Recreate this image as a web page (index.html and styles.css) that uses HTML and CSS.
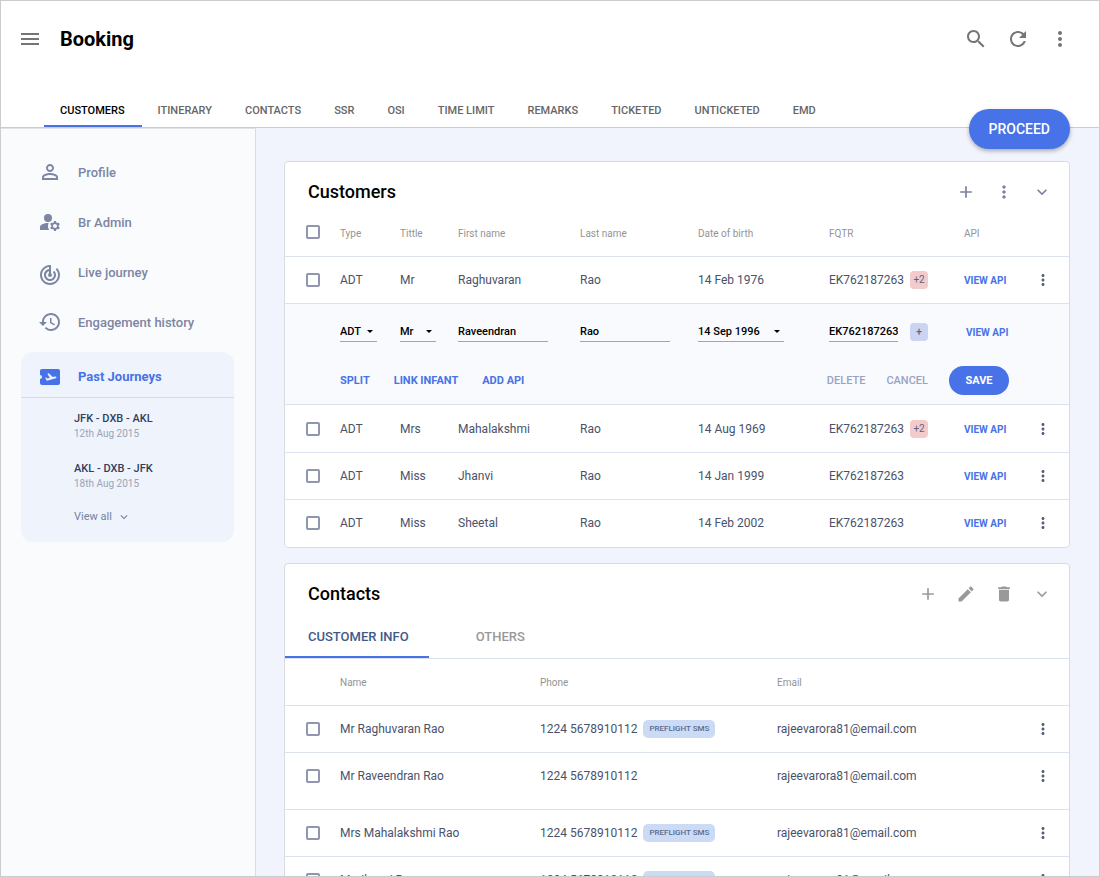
FILE: index.html
```html
<!DOCTYPE html>
<html lang="en">
<head>
    <meta charset="UTF-8">
    <meta name="viewport" content="width=device-width, initial-scale=1.0">
    <title>Booking</title>
    <link rel="stylesheet" href="styles.css">
</head>
<body>
    <!-- shared icons -->
    <svg class="sprite" aria-hidden="true">
        <symbol id="more" viewBox="0 0 24 24"><path d="M12 8c1.1 0 2-.9 2-2s-.9-2-2-2-2 .9-2 2 .9 2 2 2zm0 2c-1.1 0-2 .9-2 2s.9 2 2 2 2-.9 2-2-.9-2-2-2zm0 6c-1.1 0-2 .9-2 2s.9 2 2 2 2-.9 2-2-.9-2-2-2z"/></symbol>
        <symbol id="add" viewBox="0 0 24 24"><path d="M19 13h-6v6h-2v-6H5v-2h6V5h2v6h6v2z"/></symbol>
        <symbol id="chevron" viewBox="0 0 24 24"><path d="M16.59 8.59L12 13.17 7.41 8.59 6 10l6 6 6-6z"/></symbol>
    </svg>

    <div class="app">
        <header class="header">
            <div class="topbar">
                <button class="icon-btn" aria-label="Menu">
                    <svg class="icon-lg" viewBox="0 0 24 24"><path d="M3 18h18v-2H3v2zm0-5h18v-2H3v2zm0-7v2h18V6H3z"/></svg>
                </button>
                <h1>Booking</h1>
                <div class="topbar-actions">
                    <button class="icon-btn" aria-label="Search">
                        <svg class="icon-lg" viewBox="0 0 24 24"><path d="M15.5 14h-.79l-.28-.27C15.41 12.59 16 11.11 16 9.5 16 5.91 13.09 3 9.5 3S3 5.91 3 9.5 5.91 16 9.5 16c1.61 0 3.09-.59 4.23-1.57l.27.28v.79l5 4.99L20.49 19l-4.99-5zm-6 0C7.01 14 5 11.99 5 9.5S7.01 5 9.5 5 14 7.01 14 9.5 11.99 14 9.5 14z"/></svg>
                    </button>
                    <button class="icon-btn" aria-label="Refresh">
                        <svg class="icon-lg" viewBox="0 0 24 24"><path d="M17.65 6.35C16.2 4.9 14.21 4 12 4c-4.42 0-7.99 3.58-7.99 8s3.57 8 7.99 8c3.73 0 6.84-2.55 7.73-6h-2.08c-.82 2.33-3.04 4-5.65 4-3.31 0-6-2.69-6-6s2.69-6 6-6c1.66 0 3.14.69 4.22 1.78L13 11h7V4l-2.35 2.35z"/></svg>
                    </button>
                    <button class="icon-btn" aria-label="More"><svg class="icon-lg"><use href="#more"/></svg></button>
                </div>
            </div>
            <nav class="tabs">
                <a href="#" class="tab active">CUSTOMERS</a>
                <a href="#" class="tab">ITINERARY</a>
                <a href="#" class="tab">CONTACTS</a>
                <a href="#" class="tab">SSR</a>
                <a href="#" class="tab">OSI</a>
                <a href="#" class="tab">TIME LIMIT</a>
                <a href="#" class="tab">REMARKS</a>
                <a href="#" class="tab">TICKETED</a>
                <a href="#" class="tab">UNTICKETED</a>
                <a href="#" class="tab">EMD</a>
            </nav>
            <button class="proceed">PROCEED</button>
        </header>

        <div class="body">
            <aside class="sidebar">
                <a href="#" class="side-link">
                    <svg class="icon-lg" viewBox="0 0 24 24"><path d="M12 5.9a2.1 2.1 0 110 4.2 2.1 2.1 0 010-4.2m0 9c2.97 0 6.1 1.46 6.1 2.1v1.1H5.9V17c0-.64 3.13-2.1 6.1-2.1M12 4C9.79 4 8 5.79 8 8s1.79 4 4 4 4-1.79 4-4-1.79-4-4-4zm0 9c-2.67 0-8 1.34-8 4v3h16v-3c0-2.66-5.33-4-8-4z"/></svg>
                    Profile
                </a>
                <a href="#" class="side-link">
                    <svg class="icon-lg" viewBox="0 0 24 24"><circle cx="10" cy="8" r="4"/><path d="M10.67 13.02C10.45 13.01 10.23 13 10 13c-2.42 0-4.68.67-6.61 1.82C2.51 15.34 2 16.32 2 17.35V20h9.26C10.47 18.87 10 17.49 10 16c0-1.07.25-2.07.67-2.98z"/><path d="M20.75 16c0-.22-.03-.42-.06-.63l1.14-1.01-1-1.73-1.45.49c-.32-.27-.68-.48-1.08-.63L18 11h-2l-.3 1.49c-.4.15-.76.36-1.08.63l-1.45-.49-1 1.73 1.14 1.01c-.03.21-.06.41-.06.63s.03.42.06.63l-1.14 1.01 1 1.73 1.45-.49c.32.27.68.48 1.08.63L16 21h2l.3-1.49c.4-.15.76-.36 1.08-.63l1.45.49 1-1.73-1.14-1.01c.03-.21.06-.41.06-.63zM17 18c-1.1 0-2-.9-2-2s.9-2 2-2 2 .9 2 2-.9 2-2 2z"/></svg>
                    Br Admin
                </a>
                <a href="#" class="side-link">
                    <svg class="icon-lg" viewBox="0 -3 24 24"><path d="M19.07 4.93l-1.41 1.41C19.1 7.79 20 9.79 20 12c0 4.42-3.58 8-8 8s-8-3.58-8-8c0-4.08 3.05-7.44 7-7.93v2.02C8.16 6.57 6 9.03 6 12c0 3.31 2.69 6 6 6s6-2.69 6-6c0-1.66-.67-3.16-1.76-4.24l-1.41 1.41C15.55 9.9 16 10.9 16 12c0 2.21-1.79 4-4 4s-4-1.79-4-4c0-1.86 1.28-3.41 3-3.86v2.14c-.6.35-1 .98-1 1.72 0 1.1.9 2 2 2s2-.9 2-2c0-.74-.4-1.38-1-1.72V2h-1C6.48 2 2 6.48 2 12s4.48 10 10 10 10-4.48 10-10c0-2.76-1.12-5.26-2.93-7.07z"/></svg>
                    Live journey
                </a>
                <a href="#" class="side-link">
                    <svg class="icon-lg" viewBox="0 0 24 24"><path d="M13 3c-4.97 0-9 4.03-9 9H1l3.89 3.89.07.14L9 12H6c0-3.87 3.13-7 7-7s7 3.13 7 7-3.13 7-7 7c-1.93 0-3.68-.79-4.94-2.06l-1.42 1.42C8.27 19.99 10.51 21 13 21c4.97 0 9-4.03 9-9s-4.03-9-9-9zm-1 5v5l4.28 2.54.72-1.21-3.5-2.08V8H12z"/></svg>
                    Engagement history
                </a>
                <section class="journeys">
                    <h2 class="journeys-title">
                        <svg class="icon-lg" viewBox="0 0 24 24"><path d="M20.19 4H4c-1.1 0-1.99.9-1.99 2v4c1.1 0 1.99.9 1.99 2s-.89 2-2 2v4c0 1.1.9 2 2 2h16.19c1 0 1.81-.9 1.81-2V6c0-1.1-.81-2-1.81-2zm-2.46 9.3l-8.86 2.36-1.66-2.88.93-.25 1.26.99 2.39-.64-2.4-4.16 1.4-.38 4.01 3.74 2.44-.65c.51-.14 1.04.17 1.18.68.13.51-.17 1.04-.69 1.19z"/></svg>
                        Past Journeys
                    </h2>
                    <ul class="journey-list">
                        <li><a href="#">JFK - DXB - AKL</a><span>12th Aug 2015</span></li>
                        <li><a href="#">AKL - DXB - JFK</a><span>18th Aug 2015</span></li>
                    </ul>
                    <button class="view-all">View all <svg class="icon-xs"><use href="#chevron"/></svg></button>
                </section>
            </aside>

            <main class="main">
                <section class="card">
                    <div class="card-head">
                        <h2>Customers</h2>
                        <div class="card-actions">
                            <button class="icon-btn" aria-label="Add"><svg class="icon"><use href="#add"/></svg></button>
                            <button class="icon-btn" aria-label="More"><svg class="icon"><use href="#more"/></svg></button>
                            <button class="icon-btn" aria-label="Collapse"><svg class="icon"><use href="#chevron"/></svg></button>
                        </div>
                    </div>
                    <table class="table customers">
                        <colgroup>
                            <col class="c-check"><col class="c-type"><col class="c-title"><col class="c-first"><col class="c-last">
                            <col class="c-dob"><col class="c-fqtr"><col class="c-api"><col class="c-more">
                        </colgroup>
                        <thead>
                            <tr>
                                <th class="check"><input type="checkbox" aria-label="Select all customers"></th>
                                <th>Type</th>
                                <th>Tittle</th>
                                <th>First name</th>
                                <th>Last name</th>
                                <th>Date of birth</th>
                                <th>FQTR</th>
                                <th>API</th>
                                <th></th>
                            </tr>
                        </thead>
                        <tbody>
                            <tr>
                                <td class="check"><input type="checkbox" aria-label="Select Raghuvaran Rao"></td>
                                <td>ADT</td>
                                <td>Mr</td>
                                <td>Raghuvaran</td>
                                <td>Rao</td>
                                <td>14 Feb 1976</td>
                                <td><div class="inline">EK762187263 <span class="badge red">+2</span></div></td>
                                <td><a href="#" class="api-link">VIEW API</a></td>
                                <td class="more"><button class="icon-btn" aria-label="More"><svg class="icon-sm"><use href="#more"/></svg></button></td>
                            </tr>
                            <tr class="edit-row">
                                <td></td>
                                <td><div class="select w-type"><select aria-label="Type"><option>ADT</option></select></div></td>
                                <td><div class="select w-title"><select aria-label="Title"><option>Mr</option></select></div></td>
                                <td><input class="field w-name" type="text" aria-label="First name" value="Raveendran"></td>
                                <td><input class="field w-name" type="text" aria-label="Last name" value="Rao"></td>
                                <td><div class="select w-dob"><select aria-label="Date of birth"><option>14 Sep 1996</option></select></div></td>
                                <td><div class="inline wide"><input class="field w-fqtr" type="text" aria-label="FQTR" value="EK762187263"><button class="badge blue" aria-label="Add FQTR">+</button></div></td>
                                <td class="api-cell"><a href="#" class="api-link">VIEW API</a></td>
                                <td></td>
                            </tr>
                            <tr class="edit-actions">
                                <td></td>
                                <td colspan="8">
                                    <div class="actions">
                                        <div class="actions-left">
                                            <button class="text-btn">SPLIT</button>
                                            <button class="text-btn">LINK INFANT</button>
                                            <button class="text-btn">ADD API</button>
                                        </div>
                                        <div class="actions-right">
                                            <button class="text-btn muted">DELETE</button>
                                            <button class="text-btn muted">CANCEL</button>
                                            <button class="save">SAVE</button>
                                        </div>
                                    </div>
                                </td>
                            </tr>
                            <tr>
                                <td class="check"><input type="checkbox" aria-label="Select Mahalakshmi Rao"></td>
                                <td>ADT</td>
                                <td>Mrs</td>
                                <td>Mahalakshmi</td>
                                <td>Rao</td>
                                <td>14 Aug 1969</td>
                                <td><div class="inline">EK762187263 <span class="badge red">+2</span></div></td>
                                <td><a href="#" class="api-link">VIEW API</a></td>
                                <td class="more"><button class="icon-btn" aria-label="More"><svg class="icon-sm"><use href="#more"/></svg></button></td>
                            </tr>
                            <tr>
                                <td class="check"><input type="checkbox" aria-label="Select Jhanvi Rao"></td>
                                <td>ADT</td>
                                <td>Miss</td>
                                <td>Jhanvi</td>
                                <td>Rao</td>
                                <td>14 Jan 1999</td>
                                <td>EK762187263</td>
                                <td><a href="#" class="api-link">VIEW API</a></td>
                                <td class="more"><button class="icon-btn" aria-label="More"><svg class="icon-sm"><use href="#more"/></svg></button></td>
                            </tr>
                            <tr>
                                <td class="check"><input type="checkbox" aria-label="Select Sheetal Rao"></td>
                                <td>ADT</td>
                                <td>Miss</td>
                                <td>Sheetal</td>
                                <td>Rao</td>
                                <td>14 Feb 2002</td>
                                <td>EK762187263</td>
                                <td><a href="#" class="api-link">VIEW API</a></td>
                                <td class="more"><button class="icon-btn" aria-label="More"><svg class="icon-sm"><use href="#more"/></svg></button></td>
                            </tr>
                        </tbody>
                    </table>
                </section>

                <section class="card">
                    <div class="card-head">
                        <h2>Contacts</h2>
                        <div class="card-actions gray">
                            <button class="icon-btn" aria-label="Add"><svg class="icon"><use href="#add"/></svg></button>
                            <button class="icon-btn" aria-label="Edit"><svg class="icon" viewBox="0 0 24 24"><path d="M3 17.25V21h3.75L17.81 9.94l-3.75-3.75L3 17.25zM20.71 7.04c.39-.39.39-1.02 0-1.41l-2.34-2.34c-.39-.39-1.02-.39-1.41 0l-1.83 1.83 3.75 3.75 1.83-1.83z"/></svg></button>
                            <button class="icon-btn" aria-label="Delete"><svg class="icon" viewBox="0 0 24 24"><path d="M6 19c0 1.1.9 2 2 2h8c1.1 0 2-.9 2-2V7H6v12zM19 4h-3.500l-1-1h-5l-1 1H5v2h14V4z"/></svg></button>
                            <button class="icon-btn" aria-label="Collapse"><svg class="icon"><use href="#chevron"/></svg></button>
                        </div>
                    </div>
                    <div class="card-tabs">
                        <button class="card-tab active">CUSTOMER INFO</button>
                        <button class="card-tab">OTHERS</button>
                    </div>
                    <table class="table contacts">
                        <colgroup>
                            <col class="c-check"><col class="c-name"><col class="c-phone"><col class="c-email"><col class="c-more">
                        </colgroup>
                        <thead>
                            <tr>
                                <th></th>
                                <th>Name</th>
                                <th>Phone</th>
                                <th>Email</th>
                                <th></th>
                            </tr>
                        </thead>
                        <tbody>
                            <tr>
                                <td class="check"><input type="checkbox" aria-label="Select Mr Raghuvaran Rao"></td>
                                <td>Mr Raghuvaran Rao</td>
                                <td><div class="inline">1224 5678910112 <span class="tag">PREFLIGHT SMS</span></div></td>
                                <td>rajeevarora81@email.com</td>
                                <td class="more"><button class="icon-btn" aria-label="More"><svg class="icon-sm"><use href="#more"/></svg></button></td>
                            </tr>
                            <tr class="tall">
                                <td class="check"><input type="checkbox" aria-label="Select Mr Raveendran Rao"></td>
                                <td>Mr Raveendran Rao</td>
                                <td>1224 5678910112</td>
                                <td>rajeevarora81@email.com</td>
                                <td class="more"><button class="icon-btn" aria-label="More"><svg class="icon-sm"><use href="#more"/></svg></button></td>
                            </tr>
                            <tr>
                                <td class="check"><input type="checkbox" aria-label="Select Mrs Mahalakshmi Rao"></td>
                                <td>Mrs Mahalakshmi Rao</td>
                                <td><div class="inline">1224 5678910112 <span class="tag">PREFLIGHT SMS</span></div></td>
                                <td>rajeevarora81@email.com</td>
                                <td class="more"><button class="icon-btn" aria-label="More"><svg class="icon-sm"><use href="#more"/></svg></button></td>
                            </tr>
                            <tr>
                                <td class="check"><input type="checkbox" aria-label="Select Mr Jhanvi Rao"></td>
                                <td>Mr Jhanvi Rao</td>
                                <td><div class="inline">1224 5678910112 <span class="tag">PREFLIGHT SMS</span></div></td>
                                <td>rajeevarora81@email.com</td>
                                <td class="more"><button class="icon-btn" aria-label="More"><svg class="icon-sm"><use href="#more"/></svg></button></td>
                            </tr>
                        </tbody>
                    </table>
                </section>
            </main>
        </div>
    </div>
</body>
</html>
```
FILE: styles.css
```css
* {
    box-sizing: border-box;
}
body {
    font-family: Roboto, sans-serif;
    font-size: 12px;
    color: #4a526b;
    margin: 0;
}
h1, h2, ul {
    margin: 0;
    padding: 0;
}
a {
    text-decoration: none;
    color: inherit;
}
button, input, select {
    font-family: inherit;
    margin: 0;
    padding: 0;
}
button {
    background: none;
    border: none;
    cursor: pointer;
}
svg {
    display: block;
    fill: currentColor;
    flex: none;
    overflow: visible;
}
.sprite {
    display: none;
}
.icon-lg {
    width: 24px;
    height: 24px;
}
.icon {
    width: 20px;
    height: 20px;
}
.icon-sm {
    width: 18px;
    height: 18px;
}
.icon-xs {
    width: 14px;
    height: 14px;
}
.icon-btn {
    display: block;
    color: inherit;
}
.app {
    height: 100vh;
    display: flex;
    flex-direction: column;
    border: 1px solid #ccc;
    overflow: hidden;
}

/* header */
.header {
    position: relative;
    flex: none;
    background-color: #fff;
    border-bottom: 1px solid #ccc;
}
.topbar {
    display: flex;
    align-items: center;
    height: 76px;
    padding: 0 27px 0 17px;
    color: #757575;
}
.topbar h1 {
    margin-left: 18px;
    font-size: 20px;
    font-weight: 700;
    color: #000;
}
.topbar-actions {
    display: flex;
    gap: 18px;
    margin-left: auto;
}
.tabs {
    display: flex;
    padding: 17px 0 0 43px;
}
.tab {
    height: 33px;
    padding: 0 17px 0 16px;
    border-bottom: 2px solid transparent;
    font-size: 11px;
    font-weight: 500;
    line-height: 33px;
    color: #666;
}
.tab.active {
    color: #000;
    border-color: #4872e8;
}
.proceed {
    position: absolute;
    right: 29px;
    bottom: -22px;
    z-index: 1;
    height: 40px;
    padding: 0 20px;
    border-radius: 20px;
    background-color: #4872e8;
    box-shadow: 0 2px 4px rgba(0, 0, 0, 0.3);
    color: #fff;
    font-size: 14px;
    font-weight: 500;
}

.body {
    flex: 1;
    display: flex;
    min-height: 0;
}

/* sidebar */
.sidebar {
    flex: none;
    width: 255px;
    padding-top: 18px;
    background-color: #fafbfd;
    border-top: 1px solid #e2e2e2;
    border-right: 1px solid #d9dbe0;
}
.side-link {
    display: flex;
    align-items: center;
    gap: 16px;
    height: 50px;
    padding-left: 37px;
    font-size: 13px;
    font-weight: 500;
    color: #7c86a3;
}
.journeys {
    margin: 5px 21px 0 20px;
    padding-bottom: 18px;
    background-color: #eef3fc;
    border-radius: 12px;
}
.journeys-title {
    display: flex;
    align-items: center;
    gap: 16px;
    height: 46px;
    padding: 4px 0 0 17px;
    border-bottom: 1px solid #d8dbe0;
    font-size: 13px;
    font-weight: 700;
    color: #4872e8;
}
.journey-list {
    list-style: none;
    padding: 13px 0 0 53px;
}
.journey-list li {
    height: 49px;
}
.journey-list li + li {
    padding-top: 1px;
}
.journey-list a,
.journey-list span {
    display: block;
    line-height: 15px;
}
.journey-list a {
    font-size: 11px;
    font-weight: 500;
    color: #343d5c;
}
.journey-list span {
    font-size: 10px;
    color: #9aa3b8;
}
.view-all {
    display: flex;
    align-items: center;
    gap: 5px;
    height: 15px;
    margin-left: 53px;
    font-size: 11px;
    color: #7482a3;
}

/* cards */
.main {
    flex: 1;
    min-width: 0;
    padding: 33px 29px 0 28px;
    background-color: #f1f4fd;
    overflow: hidden;
}
.card {
    margin-bottom: 15px;
    background-color: #fff;
    border: 1px solid #d9dbe2;
    border-radius: 4px;
}
.card-head {
    display: flex;
    align-items: center;
    justify-content: space-between;
    height: 49px;
    padding: 10px 17px 0 23px;
}
.card-head h2 {
    font-size: 18px;
    font-weight: 500;
    color: #000;
}
.card-actions {
    display: flex;
    gap: 18px;
    color: #7a829c;
}
.card-actions.gray {
    color: #999;
}
.card-tabs {
    display: flex;
    border-bottom: 1px solid #dde2f1;
}
.card-tab {
    height: 45px;
    padding: 4px 46px 0 47px;
    border-bottom: 2px solid transparent;
    font-size: 13px;
    font-weight: 500;
    color: #999;
}
.card-tab.active {
    padding: 4px 20px 0 23px;
    border-color: #4872e8;
    color: #3f5b88;
}

/* tables */
.table {
    width: 100%;
    table-layout: fixed;
    border-collapse: separate;
    border-spacing: 0;
}
.c-check { width: 55px; }
.c-type { width: 60px; }
.c-title { width: 58px; }
.c-first { width: 122px; }
.c-last { width: 118px; }
.c-dob { width: 131px; }
.c-fqtr { width: 135px; }
.c-api { width: 62px; }
.c-more { width: 43px; }
.c-name { width: 200px; }
.c-phone { width: 237px; }
.c-email { width: 249px; }
th, td {
    height: 47px;
    padding: 0;
    border-bottom: 1px solid #dde2f1;
    text-align: left;
    white-space: nowrap;
}
th {
    font-size: 10px;
    font-weight: 400;
    color: #949494;
}
.customers th {
    height: 46px;
}
.customers th.check {
    padding-bottom: 4px;
}
tbody tr:last-child td {
    padding-bottom: 2px;
    border-bottom: none;
}
.tall td {
    height: 57px;
    padding-bottom: 10px;
}
.check {
    padding-left: 21px;
}
.check input {
    appearance: none;
    display: block;
    width: 14px;
    height: 14px;
    border: 2px solid #8f97ae;
    border-radius: 2px;
}
.more {
    padding-left: 8px;
    color: #555d78;
}
.inline {
    display: flex;
    align-items: center;
    gap: 6px;
}
.inline.wide {
    gap: 12px;
}
.badge {
    width: 18px;
    height: 18px;
    border-radius: 4px;
    font-size: 10px;
    line-height: 18px;
    text-align: center;
    color: #5a6486;
}
.red {
    background-color: #f4cbcb;
}
.blue {
    background-color: #cbd5f2;
    font-weight: 500;
}
.tag {
    padding: 0 6px;
    border-radius: 5px;
    background-color: #cbdbf5;
    font-size: 8px;
    font-weight: 500;
    line-height: 18px;
    color: #5a6a90;
}
.api-link {
    font-size: 10px;
    font-weight: 700;
    color: #4872e8;
}

/* row being edited */
.edit-row td,
.edit-actions td {
    background-color: #f9fafe;
}
.edit-row td {
    height: 56px;
    border-bottom: none;
}
.edit-row .api-cell {
    padding-left: 2px;
}
.edit-actions td {
    height: 45px;
    padding-bottom: 4px;
}
.edit-actions + tr td {
    height: 48px;
}
.field,
.select {
    height: 20px;
    border: none;
    border-bottom: 1px solid #a3a6ae;
    border-radius: 0;
    background: none;
    color: #000;
    font-size: 11px;
    font-weight: 500;
}
.select {
    display: flex;
    align-items: center;
    padding-right: 4px;
}
.select select {
    flex: 1;
    min-width: 0;
    appearance: none;
    border: none;
    background: none;
    color: inherit;
    font-size: 11px;
    font-weight: 500;
}
.select::after {
    content: "";
    border: 3px solid transparent;
    border-top-color: #000;
    border-bottom: none;
}
.w-type { width: 37px; }
.w-title { width: 36px; }
.w-name { width: 90px; }
.w-dob { width: 86px; }
.w-fqtr { width: 69px; }
.actions,
.actions-left,
.actions-right {
    display: flex;
    align-items: center;
}
.actions {
    justify-content: space-between;
    padding-right: 60px;
}
.actions-left {
    gap: 24px;
}
.actions-right {
    gap: 21px;
}
.text-btn {
    font-size: 11px;
    font-weight: 700;
    color: #4872e8;
}
.muted {
    font-weight: 500;
    color: #98a3c4;
}
.save {
    width: 60px;
    height: 29px;
    border-radius: 15px;
    background-color: #4872e8;
    color: #fff;
    font-size: 11px;
    font-weight: 700;
}
```
